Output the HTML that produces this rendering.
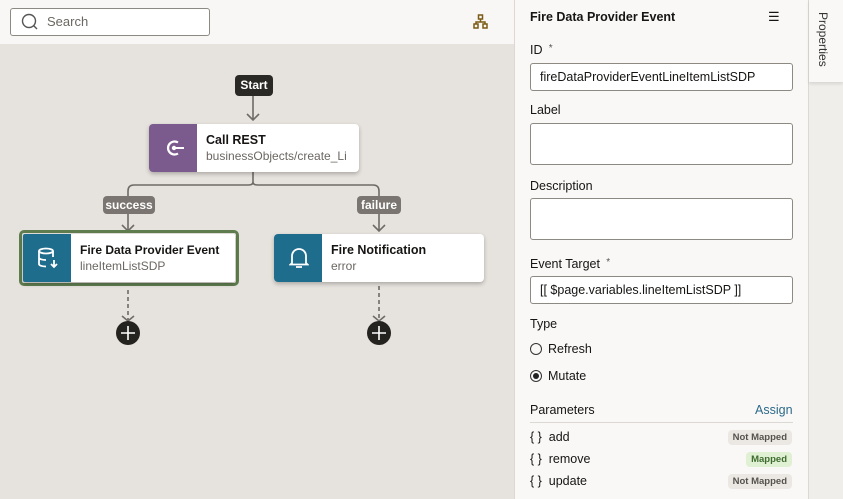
<!DOCTYPE html>
<html><head><style>
*{box-sizing:border-box;margin:0;padding:0}
body{width:843px;height:499px;overflow:hidden;font-family:"Liberation Sans",sans-serif;position:relative;background:#e6e2dd;color:#161513}
.a{position:absolute}
.lbl{font-size:12.5px;color:#161513}
.inp{position:absolute;left:530px;width:263px;background:#fff;border:1px solid #8d8983;border-radius:3px;font-size:12.5px;padding-left:9px}
.badge{position:absolute;right:51px;font-size:9.5px;font-weight:bold;color:#55524d;background:#ebe8e4;border-radius:4px;padding:2px 5px;white-space:nowrap}
.node{position:absolute;background:#fff;border-radius:4px;box-shadow:0 2px 4px rgba(0,0,0,.25);height:48px;overflow:hidden}
.node .ic{position:absolute;left:0;top:0;width:48px;height:48px}
.node b{position:absolute;left:57px;top:9px;font-size:12.5px;white-space:nowrap}
.node i{position:absolute;left:57px;top:25px;font-size:12px;font-style:normal;color:#6b6762;white-space:nowrap}
.tag{position:absolute;background:#7a7570;color:#fff;font-weight:bold;font-size:12px;border-radius:4px;height:18px;line-height:18px;text-align:center}
</style></head><body>
<div class="a" style="left:0;top:0;width:514px;height:44px;background:#f8f7f5"></div>
<div class="a" style="left:10px;top:8px;width:200px;height:28px;background:#fff;border:1px solid #8d8983;border-radius:3px"></div>
<svg class="a" style="left:20px;top:13px" width="20" height="18"><circle cx="9" cy="8" r="6.5" fill="none" stroke="#555" stroke-width="1.4"/><line x1="13.5" y1="12.5" x2="17" y2="16" stroke="#555" stroke-width="1.4"/></svg>
<div class="a" style="left:47px;top:14px;font-size:13px;color:#6b6762">Search</div>
<svg class="a" style="left:473px;top:14px" width="16" height="16"><g fill="none" stroke="#7a5a14" stroke-width="1.5"><rect x="5.5" y="1" width="4" height="4"/><rect x="1" y="10" width="4" height="4"/><rect x="10" y="10" width="4" height="4"/><path d="M7.5 5v3M3 10V8h9v2"/></g></svg>

<svg class="a" style="left:0;top:44px" width="514" height="455">
<g stroke="#6f6b66" stroke-width="1.6" fill="none">
<path d="M253 52v24M247 70l6 6 6-6"/>
<path d="M253 128v10M253 138c0 3-3 3-6 3H134c-4 0-6 2-6 6v6M253 138c0 3 3 3 6 3h114c4 0 6 2 6 6v6"/>
<path d="M128 170v17M122 181l6 6 6-6M379 170v17M373 181l6 6 6-6"/>
<path d="M128 246v30M379 242v34" stroke-dasharray="4 3"/>
<path d="M122 272l6 5 6-5M373 272l6 5 6-5"/>
</g>
<circle cx="128" cy="289" r="12" fill="#252320"/><path d="M121 289h14M128 282v14" stroke="#fff" stroke-width="1.6"/>
<circle cx="379" cy="289" r="12" fill="#252320"/><path d="M372 289h14M379 282v14" stroke="#fff" stroke-width="1.6"/>
</svg>
<div class="tag" style="left:235px;top:75px;width:38px;height:21px;line-height:21px;background:#2b2926">Start</div>
<div class="tag" style="left:103px;top:196px;width:52px">success</div>
<div class="tag" style="left:357px;top:196px;width:44px">failure</div>

<div class="node" style="left:149px;top:124px;width:210px"><div class="ic" style="background:#7b5a8e"></div>
<svg class="a" style="left:13px;top:13px" width="24" height="22"><path d="M16 5.5A6.5 6.5 0 1 0 16 16.5" fill="none" stroke="#fff" stroke-width="2.2"/><circle cx="12" cy="11" r="2.2" fill="#fff"/><path d="M12 11h10" stroke="#fff" stroke-width="2"/></svg>
<b>Call REST</b><i>businessObjects/create_Li</i></div>

<div class="a" style="left:19px;top:230px;width:220px;height:56px;border:3px solid #5f7d4f;border-radius:5px"></div>
<div class="node" style="left:23px;top:234px;width:212px;border-radius:2px"><div class="ic" style="background:#1f6d8d"></div>
<svg class="a" style="left:14px;top:13px" width="22" height="22"><g fill="none" stroke="#fff" stroke-width="1.8"><ellipse cx="9" cy="4" rx="7" ry="2.5"/><path d="M2 4v13c0 1.5 3 2.5 7 2.5M16 4v6M2 10.5c0 1.5 3 2.5 7 2.5"/><path d="M17 13v7M14 17l3 3 3-3"/></g></svg>
<b style="font-size:12px">Fire Data Provider Event</b><i>lineItemListSDP</i></div>

<div class="node" style="left:274px;top:234px;width:210px"><div class="ic" style="background:#1f6d8d"></div>
<svg class="a" style="left:15px;top:13px" width="20" height="22"><path d="M3 16V9a7 7 0 0 1 14 0v7l1.5 1.5h-17z M7 20h6" fill="none" stroke="#fff" stroke-width="1.8"/></svg>
<b>Fire Notification</b><i>error</i></div>

<div class="a" style="left:514px;top:0;width:294px;height:499px;background:#f9f8f6;border-left:1px solid #dcd8d3"></div>
<div class="a" style="left:808px;top:0;width:35px;height:499px;background:#f0eeeb;border-left:1px solid #dcd8d3"></div>
<div class="a" style="left:809px;top:0;width:34px;height:82px;background:#f9f8f6;box-shadow:0 2px 3px rgba(0,0,0,.1)"></div>
<div class="a" style="left:816px;top:12px;font-size:12px;writing-mode:vertical-rl;color:#333">Properties</div>

<div class="a" style="left:530px;top:10px;font-size:12.5px;font-weight:bold">Fire Data Provider Event</div>
<div class="a" style="left:768px;top:9px;font-size:13px">☰</div>
<div class="a lbl" style="left:530px;top:43px">ID <span style="font-size:10px;vertical-align:top;color:#555">&nbsp;*</span></div>
<div class="inp" style="top:63px;height:28px;line-height:26px">fireDataProviderEventLineItemListSDP</div>
<div class="a lbl" style="left:530px;top:103px">Label</div>
<div class="inp" style="top:123px;height:42px"></div>
<div class="a lbl" style="left:530px;top:179px">Description</div>
<div class="inp" style="top:198px;height:42px"></div>
<div class="a lbl" style="left:530px;top:257px">Event Target <span style="font-size:10px;vertical-align:top;color:#555">&nbsp;*</span></div>
<div class="inp" style="top:276px;height:28px;line-height:26px">[[ $page.variables.lineItemListSDP ]]</div>
<div class="a lbl" style="left:530px;top:317px">Type</div>
<div class="a" style="left:530px;top:343px;width:12px;height:12px;border:1px solid #333;border-radius:50%"></div>
<div class="a lbl" style="left:548px;top:342px">Refresh</div>
<div class="a" style="left:530px;top:370px;width:12px;height:12px;border:1px solid #333;border-radius:50%"><div style="margin:2px;width:6px;height:6px;border-radius:50%;background:#222"></div></div>
<div class="a lbl" style="left:548px;top:369px">Mutate</div>
<div class="a lbl" style="left:530px;top:403px">Parameters</div>
<div class="a" style="left:755px;top:403px;font-size:12.5px;color:#2d6a8a">Assign</div>
<div class="a" style="left:530px;top:422px;width:263px;height:1px;background:#dcd8d3"></div>
<div class="a lbl" style="left:530px;top:430px">{ }&nbsp; add</div>
<div class="badge" style="top:430px">Not Mapped</div>
<div class="a lbl" style="left:530px;top:452px">{ }&nbsp; remove</div>
<div class="badge" style="top:452px;background:#dff0d3;color:#3f6b2f">Mapped</div>
<div class="a lbl" style="left:530px;top:474px">{ }&nbsp; update</div>
<div class="badge" style="top:474px">Not Mapped</div>
</body></html>
